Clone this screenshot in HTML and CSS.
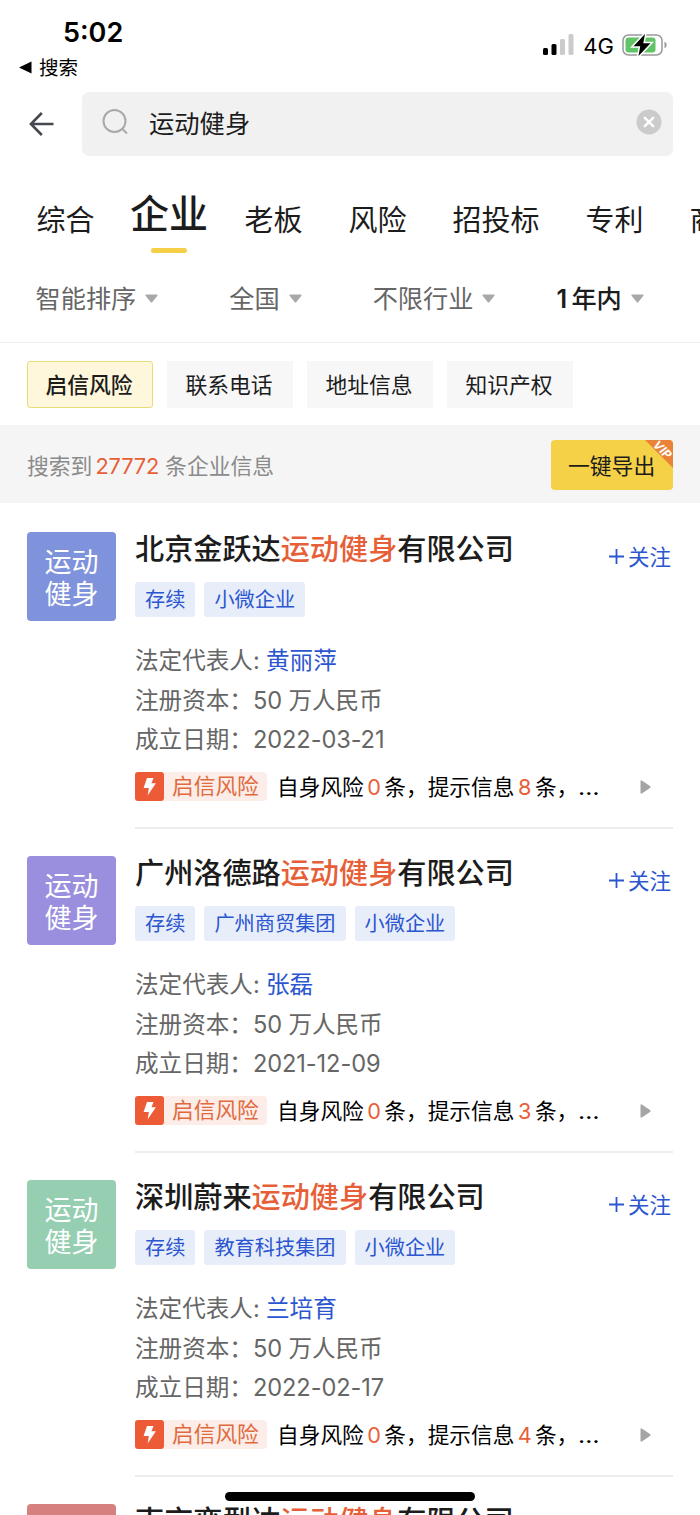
FILE: index.html
```html
<!DOCTYPE html>
<html lang="zh-CN">
<head>
<meta charset="utf-8">
<title>运动健身</title>
<link rel="stylesheet" href="styles.css">
</head>
<body>
<svg width="0" height="0" class="defs">
  <symbol id="bolt" viewBox="0 0 29 29"><path d="M12 6h6.500l-2 5.300h4.400L12.600 23.500l1.300-7.500H8.600z" fill="#fff"/></symbol>
  <symbol id="down" viewBox="0 0 13 9"><path d="M1 .5h11q1 .3.4 1.200L7.400 8Q6.500 9 5.600 8L.6 1.700Q0 .8 1 .5z" fill="#a8a8a8"/></symbol>
  <symbol id="play" viewBox="0 0 11 14"><path d="M.5 1Q.7 0 1.800.5L10 6Q11.200 7 10 8L1.800 13.500Q.7 14 .5 13z" fill="#a5a5a5"/></symbol>
</svg>
<div class="screen">
  <header class="status">
    <div class="status-left">
      <div class="time">5:02</div>
      <div class="back-app"><svg width="13" height="13" viewBox="0 0 13 13"><path d="M0 6.500 12.500.5v12z"/></svg><span>搜索</span></div>
    </div>
    <div class="status-right">
      <svg width="32" height="22" viewBox="0 0 32 22"><rect x="1" y="14" width="5" height="7" rx="1.500"/><rect x="9.500" y="10" width="5" height="11" rx="1.500"/><g fill="#cbcbcb"><rect x="18" y="5" width="5" height="16" rx="1.500"/><rect x="26.500" y="0" width="5" height="21" rx="1.500"/></g></svg>
      <span class="net">4G</span>
      <svg width="46" height="24" viewBox="0 0 46 24"><rect x="1" y="2" width="39" height="20" rx="5.500" fill="#fff" stroke="#999" stroke-width="1.500"/><rect x="3.500" y="4.500" width="30" height="15" rx="3" fill="#62c466"/><path d="M42.500 8.500q2.200 1 2.200 3.500t-2.200 3.500z" fill="#999"/><path d="M23 1 11.500 13.200h6.700L16.500 23 28.500 10.200h-7.200z" stroke="#fff" stroke-width="3" paint-order="stroke"/></svg>
    </div>
  </header>

  <div class="search-row">
    <svg width="26" height="24" viewBox="0 0 26 24" fill="none" stroke="#45484e" stroke-width="2.600"><path d="M12.800 1 1.900 12l10.900 11M1.900 12H24.500"/></svg>
    <div class="search-box">
      <svg width="28" height="28" viewBox="0 0 28 28" fill="none" stroke="#a9a9a9" stroke-width="2"><circle cx="12.500" cy="13" r="11"/><path d="m20 20.500 5 5"/></svg>
      <span class="query">运动健身</span>
      <svg class="clear" width="26" height="26" viewBox="0 0 26 26"><circle cx="13" cy="13" r="12.500" fill="#cbcbcb"/><path d="m8.800 8.800 8.400 8.400m0-8.400-8.400 8.400" stroke="#fff" stroke-width="2.400" stroke-linecap="round"/></svg>
    </div>
  </div>

  <nav class="tabs">
    <span>综合</span><span class="active">企业</span><span>老板</span><span>风险</span><span>招投标</span><span>专利</span><span>商</span>
  </nav>

  <div class="filters">
    <div class="filter">智能排序<svg width="13" height="9"><use href="#down"/></svg></div>
    <div class="filter">全国<svg width="13" height="9"><use href="#down"/></svg></div>
    <div class="filter">不限行业<svg width="13" height="9"><use href="#down"/></svg></div>
    <div class="filter chosen"><span><span class="digit">1</span>年内</span><svg width="13" height="9"><use href="#down"/></svg></div>
  </div>

  <div class="chips"><span class="chip on">启信风险</span><span class="chip">联系电话</span><span class="chip">地址信息</span><span class="chip">知识产权</span></div>

  <div class="summary">
    <p>搜索到<b>27772</b>条企业信息</p>
    <div class="export">一键导出<svg class="vip" width="28" height="28" viewBox="0 0 28 28"><path d="M0 0h24q4 0 4 4v24z" fill="#ea8337"/><text x="17.500" y="13.800" transform="rotate(45 17.500 9.500)" text-anchor="middle">VIP</text></svg></div>
  </div>

  <main>
    <article class="company">
      <div class="avatar blue">运动<br>健身</div>
      <div class="body">
        <div class="head"><h2>北京金跃达<em>运动健身</em>有限公司</h2><span class="follow"><svg width="15" height="15" viewBox="0 0 15 15"><path d="M7.500 0v15M0 7.500h15"/></svg>关注</span></div>
        <div class="tags"><span>存续</span><span>小微企业</span></div>
        <dl><div><dt class="tight">法定代表人:</dt><dd class="link">黄丽萍</dd></div><div><dt>注册资本：</dt><dd>50 万人民币</dd></div><div><dt>成立日期：</dt><dd>2022-03-21</dd></div></dl>
        <div class="risk"><svg class="bolt" width="29" height="29"><use href="#bolt"/></svg><span class="risk-name">启信风险</span><span class="risk-text">自身风险<i>0</i>条，提示信息<i>8</i>条，<s>…</s></span><svg class="more" width="11" height="14"><use href="#play"/></svg></div>
      </div>
    </article>
    <article class="company">
      <div class="avatar purple">运动<br>健身</div>
      <div class="body">
        <div class="head"><h2>广州洛德路<em>运动健身</em>有限公司</h2><span class="follow"><svg width="15" height="15" viewBox="0 0 15 15"><path d="M7.500 0v15M0 7.500h15"/></svg>关注</span></div>
        <div class="tags"><span>存续</span><span>广州商贸集团</span><span>小微企业</span></div>
        <dl><div><dt class="tight">法定代表人:</dt><dd class="link">张磊</dd></div><div><dt>注册资本：</dt><dd>50 万人民币</dd></div><div><dt>成立日期：</dt><dd>2021-12-09</dd></div></dl>
        <div class="risk"><svg class="bolt" width="29" height="29"><use href="#bolt"/></svg><span class="risk-name">启信风险</span><span class="risk-text">自身风险<i>0</i>条，提示信息<i>3</i>条，<s>…</s></span><svg class="more" width="11" height="14"><use href="#play"/></svg></div>
      </div>
    </article>
    <article class="company">
      <div class="avatar green">运动<br>健身</div>
      <div class="body">
        <div class="head"><h2>深圳蔚来<em>运动健身</em>有限公司</h2><span class="follow"><svg width="15" height="15" viewBox="0 0 15 15"><path d="M7.500 0v15M0 7.500h15"/></svg>关注</span></div>
        <div class="tags"><span>存续</span><span>教育科技集团</span><span>小微企业</span></div>
        <dl><div><dt class="tight">法定代表人:</dt><dd class="link">兰培育</dd></div><div><dt>注册资本：</dt><dd>50 万人民币</dd></div><div><dt>成立日期：</dt><dd>2022-02-17</dd></div></dl>
        <div class="risk"><svg class="bolt" width="29" height="29"><use href="#bolt"/></svg><span class="risk-name">启信风险</span><span class="risk-text">自身风险<i>0</i>条，提示信息<i>4</i>条，<s>…</s></span><svg class="more" width="11" height="14"><use href="#play"/></svg></div>
      </div>
    </article>
    <article class="company">
      <div class="avatar red"></div>
      <div class="body"><div class="head"><h2>南京奕型达<em>运动健身</em>有限公司</h2></div></div>
    </article>
  </main>
  <div class="home-bar"></div>
</div>
</body>
</html>
```

FILE: styles.css
```css
* { box-sizing: border-box; margin: 0; padding: 0; }
html, body { height: 1515px; overflow: hidden; }
body { font-family: Inter, "Noto Sans CJK SC", sans-serif; background: #fff; color: #1c1c1c; }
svg { display: block; flex: none; }
.defs { position: absolute; }
.screen { position: relative; width: 700px; height: 1515px; overflow: hidden; white-space: nowrap; }

.status { height: 92px; display: flex; justify-content: space-between; padding: 17px 32px 0 19px; color: #000; }
.time { padding-left: 44px; font-size: 27px; font-weight: 600; line-height: 32px; }
.back-app { display: flex; align-items: center; gap: 7px; margin-top: 5px; font-size: 19.500px; line-height: 26px; font-weight: 400; }
.back-app span { padding-top: 1px; }
.status-right { display: flex; align-items: center; height: 24px; margin-top: 16px; }
.net { margin: 0 8px 0 9px; font-size: 22px; font-weight: 400; line-height: 24px; padding-top: 1px; }

.search-row { display: flex; align-items: center; height: 64px; padding: 0 27px 0 29px; }
.search-box { display: flex; align-items: center; flex: 1; height: 64px; margin-left: 27px; padding: 0 11px 4px 20px; border-radius: 7px; background: #f1f1f1; }
.query { margin-left: 19px; font-size: 25.300px; line-height: 40px; padding-top: 4px; }
.clear { margin-left: auto; }

.tabs { display: flex; gap: 46px; height: 97px; padding: 38px 0 0 36.500px; font-size: 29px; line-height: 54px; }
.tabs span { flex: none; }
.tabs .active { display: flex; flex-direction: column; align-items: center; margin: -7px -9.500px 0 -10.500px; font-size: 39px; font-weight: 500; }
.active::after { content: ""; width: 36px; height: 5px; margin-top: 7px; border-radius: 2.500px; background: #f5cf47; }

.filters { display: flex; gap: 71px; height: 90px; padding: 26px 0 0 35.500px; border-bottom: 1px solid #eee; font-size: 25.200px; line-height: 40px; color: #666; }
.filter { display: flex; height: 40px; align-items: center; gap: 9px; }
.filter svg { margin-top: -1px; }
.chosen { margin-left: -10px; color: #1c1c1c; font-weight: 500; }
.digit { display: inline-block; width: 15px; font-weight: 600; }

.chips { display: flex; gap: 14px; height: 82px; padding: 18px 27px; }
.chip { width: 126px; height: 47px; padding-right: 2px; text-align: center; font-size: 21.800px; line-height: 49px; background: #f7f7f7; }
.chip.on { line-height: 47px; border: 1px solid #ebdc7a; border-radius: 3px; background: #fef7db; font-weight: 500; }

.summary { display: flex; align-items: center; justify-content: space-between; height: 78px; padding: 1px 27px 0; background: #f5f5f5; font-size: 21.800px; color: #8b8b8b; }
.summary p { margin-top: -1px; }
.summary b { margin: 0 6px 0 3px; font-weight: 400; letter-spacing: -.15px; color: #e75f38; }
.export { position: relative; width: 122px; height: 50px; padding-left: 17px; border-radius: 4px; background: #f5d148; color: #1c1c1c; line-height: 52px; }
.vip { position: absolute; top: 0; right: 0; }
.vip text { font: italic 700 12px Inter, sans-serif; fill: #fff; }

.company { display: flex; gap: 19px; height: 324px; padding: 29px 27px 0; }
.avatar { flex: none; width: 89px; height: 89px; padding-top: 15px; border-radius: 4px; text-align: center; color: #fff; font-size: 27px; line-height: 32px; }
.blue { background: #7f92dc; }
.purple { background: #998fde; }
.green { background: #96ceb2; }
.red { background: #d68180; }
.body { flex: 1; height: 297px; border-bottom: 2px solid #ededed; }
.head { display: flex; justify-content: space-between; height: 50px; }
h2 { padding-top: 1px; font-size: 29.150px; line-height: 34px; font-weight: 500; }
em { font-style: normal; color: #e75f38; }
.follow { display: flex; align-items: center; gap: 4px; height: 46px; padding-right: 2px; font-size: 21.500px; color: #2b56d0; }
.follow svg { margin-top: 3px; stroke: currentColor; stroke-width: 1.800; }
.tags { display: flex; gap: 9px; }
.tags span { height: 35px; padding: 0 10px; border-radius: 3px; background: #e7eefa; color: #2b56d0; font-size: 20.200px; line-height: 35px; }
dl { margin-top: 24px; font-size: 23.600px; line-height: 39.500px; color: #666; }
dl div { display: flex; }
dt { width: 118px; }
dd { letter-spacing: -.1px; }
.tight { width: 131px; }
.link { color: #2b56d0; letter-spacing: 0; }
.risk { display: flex; align-items: center; height: 29px; margin-top: 12px; font-size: 21.700px; line-height: 29px; }
.bolt { border-radius: 3px; background: #ec5b36; }
.risk-name { width: 103px; padding-left: 8px; border-radius: 0 4px 4px 0; background: #fcede8; color: #e06a3e; }
.risk-text { margin-left: 10px; padding-top: 2px; color: #000; }
i { display: inline-block; width: 20.500px; text-align: center; font-style: normal; color: #e75f38; }
s { display: inline-block; text-decoration: none; transform: scaleX(1.150); transform-origin: left; }
.more { margin: 2px 22px 0 auto; }
.home-bar { position: absolute; left: 225px; bottom: 14px; width: 250px; height: 9px; border-radius: 5px; background: #000; }
```
